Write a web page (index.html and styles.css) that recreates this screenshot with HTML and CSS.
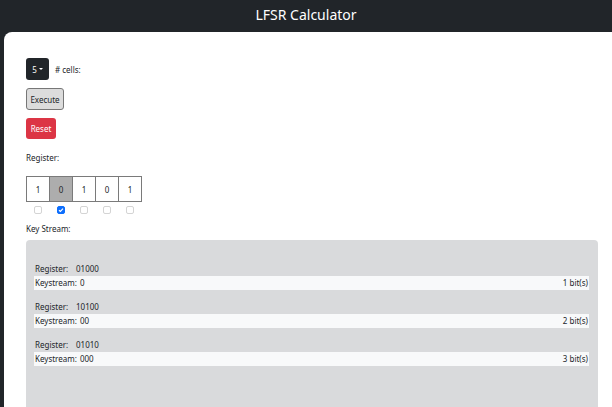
FILE: index.html
```html
<!DOCTYPE html>
<html>
<head>
<meta charset="utf-8">
<link rel="stylesheet" href="styles.css">
</head>
<body>
<header class="topbar">LFSR Calculator</header>
<main class="panel">
  <div class="cells-row">
    <button class="btn btn-dark">5<span class="caret"></span></button>
    <span class="small">#&nbsp;cells:</span>
  </div>
  <div class="btn-row"><button class="btn btn-light">Execute</button></div>
  <div class="btn-row"><button class="btn btn-red">Reset</button></div>
  <div class="label">Register:</div>
  <div class="register">
    <div class="cell-col"><div class="cell">1</div><span class="check"></span></div>
    <div class="cell-col"><div class="cell cell-active">0</div><span class="check checked"><svg viewBox="0 0 8 8" width="8" height="8"><path d="M2 4.2 L3.4 5.5 L6 2.6" fill="none" stroke="#fff" stroke-width="1.2"/></svg></span></div>
    <div class="cell-col"><div class="cell">1</div><span class="check"></span></div>
    <div class="cell-col"><div class="cell">0</div><span class="check"></span></div>
    <div class="cell-col"><div class="cell">1</div><span class="check"></span></div>
  </div>
  <div class="label label-ks">Key Stream:</div>
  <div class="stream">
    <div class="entry">
      <div class="reg-line"><span class="key-reg">Register:</span><span>01000</span></div>
      <div class="ks-line"><span><span class="key-ks">Keystream:</span>0</span><span>1 bit(s)</span></div>
    </div>
    <div class="entry">
      <div class="reg-line"><span class="key-reg">Register:</span><span>10100</span></div>
      <div class="ks-line"><span><span class="key-ks">Keystream:</span>00</span><span>2 bit(s)</span></div>
    </div>
    <div class="entry">
      <div class="reg-line"><span class="key-reg">Register:</span><span>01010</span></div>
      <div class="ks-line"><span><span class="key-ks">Keystream:</span>000</span><span>3 bit(s)</span></div>
    </div>
  </div>
</main>
</body>
</html>
```
FILE: styles.css
```css
html, body {
  margin: 0;
  height: 100%;
  overflow: hidden;
}
body {
  background: #212529;
  font-family: "Noto Sans", "Liberation Sans", sans-serif;
  color: #212529;
}
.topbar {
  height: 32px;
  line-height: 30px;
  text-align: center;
  color: #fff;
  font-size: 14px;
}
.panel {
  background: #fff;
  margin-left: 4px;
  border-top-left-radius: 8px;
  padding: 26px 14px 0 22px;
  height: calc(100vh - 32px);
  overflow: hidden;
  box-sizing: border-box;
  font-size: 8px;
}
.cells-row {
  display: flex;
  align-items: center;
  gap: 6px;
}
.btn {
  font-family: inherit;
  font-size: 8px;
  height: 22px;
  border-radius: 3px;
  padding: 0 6px;
  border: 1px solid transparent;
  cursor: pointer;
}
.btn-dark {
  background: #212529;
  color: #fff;
  width: 23px;
  padding: 0;
  display: inline-flex;
  align-items: center;
  justify-content: center;
}
.caret {
  display: inline-block;
  margin-left: 2px;
  border-left: 2px solid transparent;
  border-right: 2px solid transparent;
  border-top: 2px solid #fff;
}
.btn-row {
  margin-top: 8px;
  display: flex;
}
.btn-light {
  background: #dcdcdc;
  border-color: #777;
  color: #212529;
  width: 38px;
  padding: 0;
}
.btn-red {
  background: #dc3545;
  color: #fff;
  width: 30px;
  padding: 0;
  height: 21px;
}
.label {
  margin-top: 14px;
  line-height: 10px;
}
.register {
  display: flex;
  margin-top: 13px;
}
.cell-col {
  display: flex;
  flex-direction: column;
  align-items: center;
  margin-right: -1px;
}
.cell-col:last-child { margin-right: 0; }
.cell {
  width: 24px;
  height: 26px;
  box-sizing: border-box;
  border: 1px solid #7a7a7a;
  display: flex;
  align-items: center;
  justify-content: center;
  background: #fff;
}
.cell-active { background: #adadad; }
.check {
  margin-top: 4px;
  width: 8px;
  height: 8px;
  box-sizing: border-box;
  border: 1px solid #d4d4d4;
  border-radius: 2px;
  background: #fff;
  display: flex;
}
.check.checked {
  background: #0d6efd;
  border-color: #0d6efd;
}
.check svg { margin: -1px; }
.label-ks { margin-top: 10px; }
.stream {
  margin-top: 6px;
  background: #d9dadc;
  border-radius: 4px;
  padding: 21px 9px 0 8px;
  height: 200px;
}
.entry { margin-bottom: 9px; }
.reg-line {
  height: 15px;
  line-height: 15px;
  padding-left: 1px;
}
.ks-line {
  height: 14px;
  line-height: 14px;
  background: #f8f9fa;
  display: flex;
  justify-content: space-between;
  padding: 0 1px;
}
.key-reg {
  display: inline-block;
  width: 41px;
}
.key-ks {
  margin-right: 3px;
}
```
